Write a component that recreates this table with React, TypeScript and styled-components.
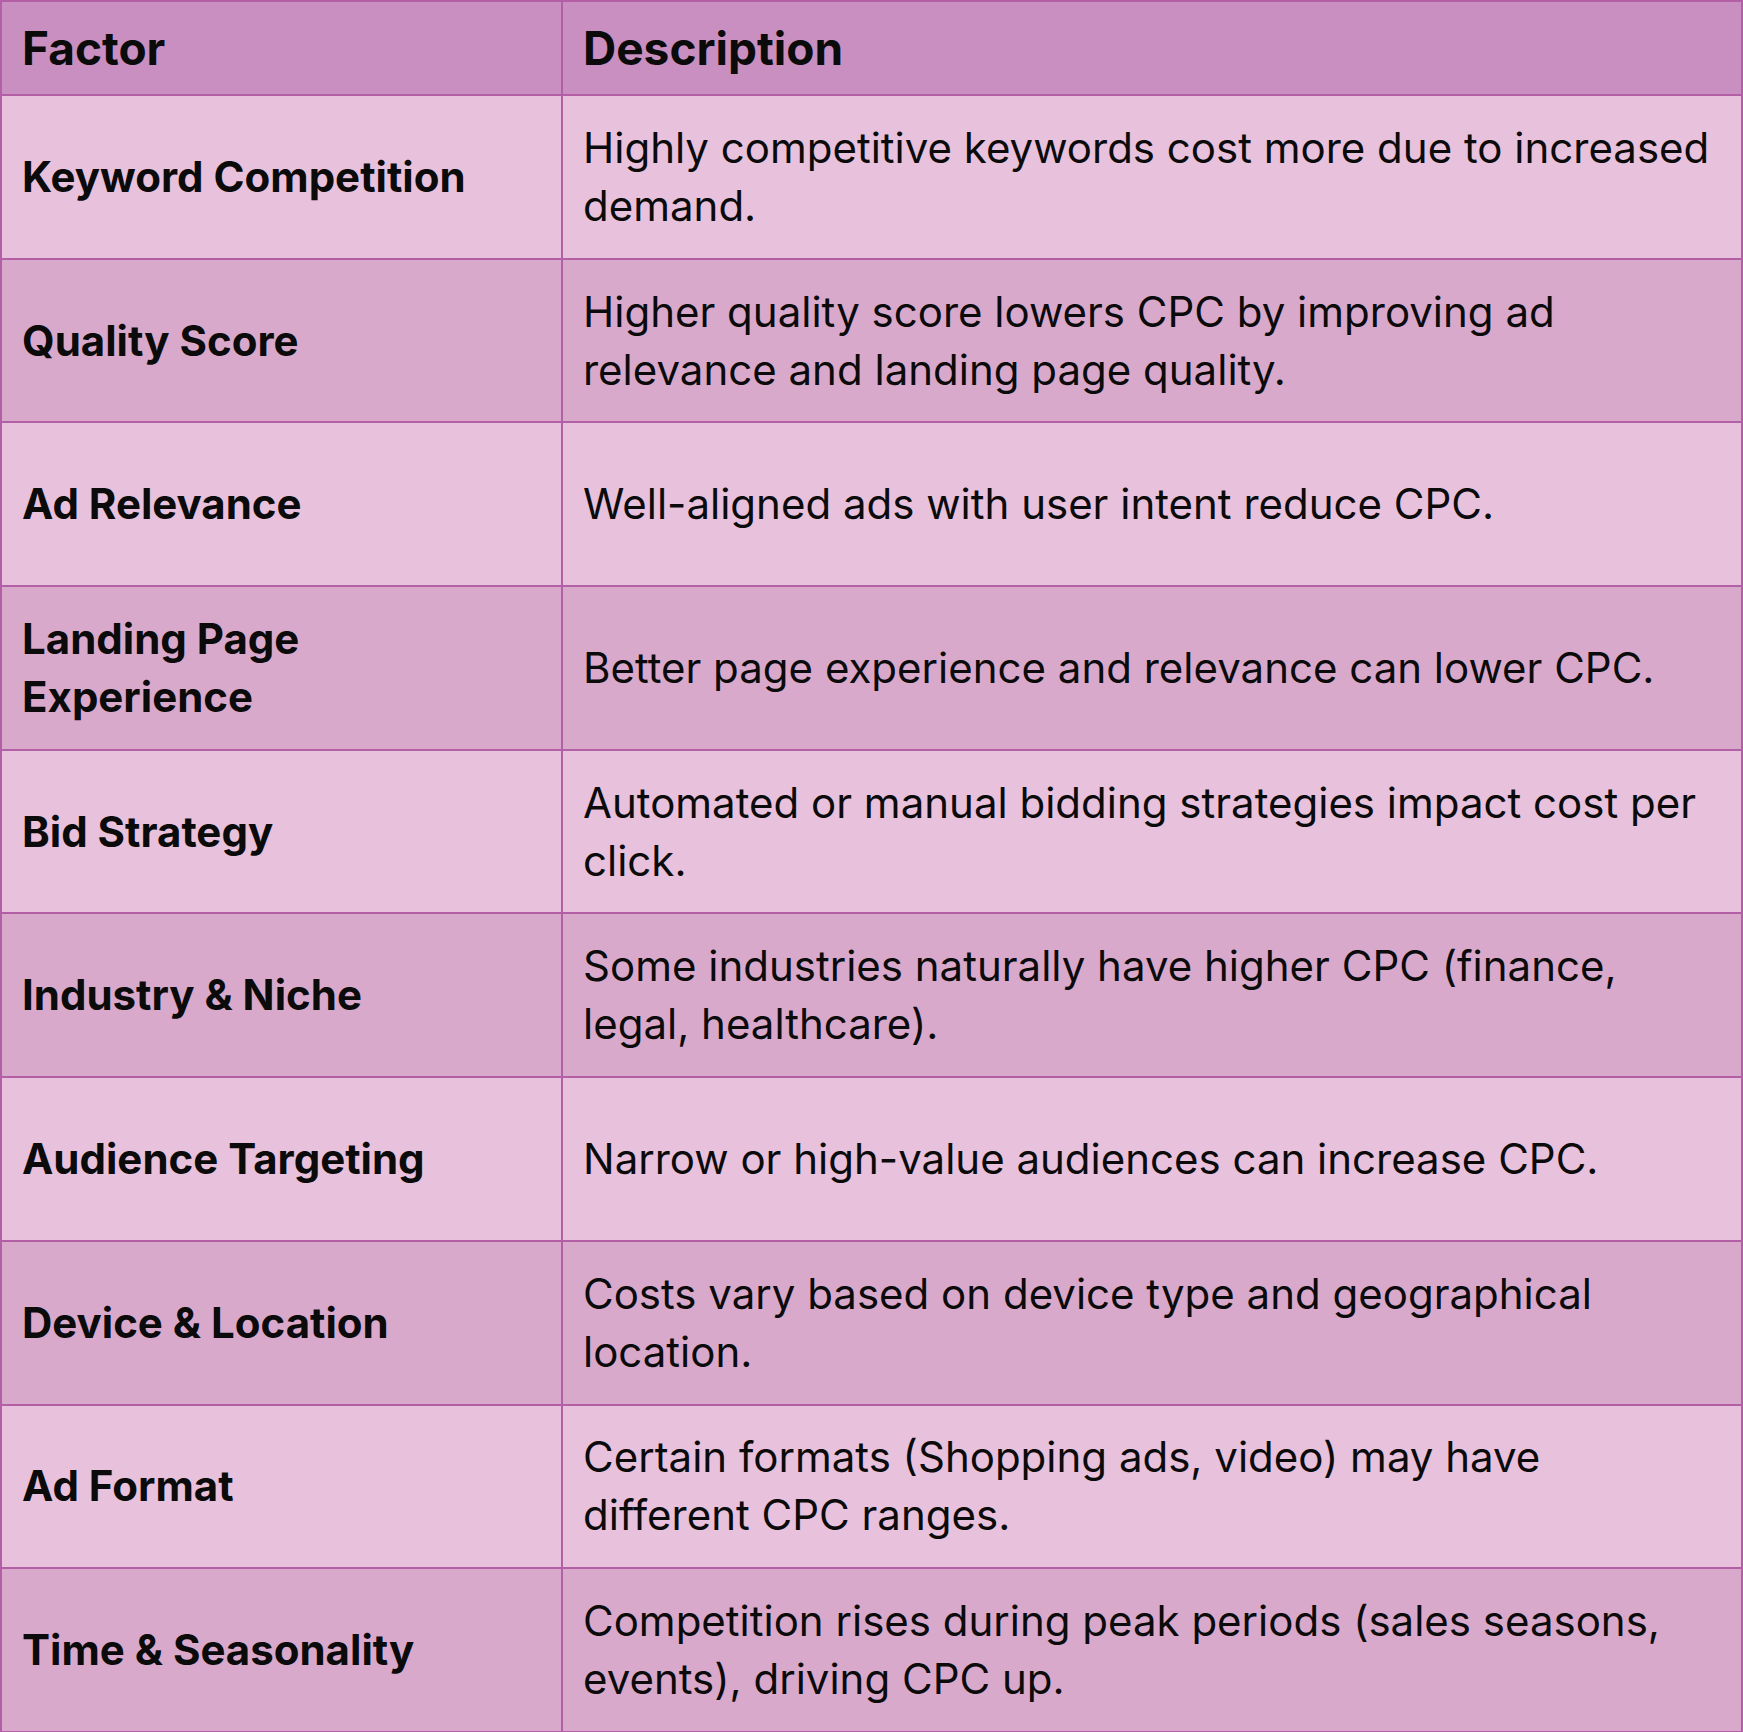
import React from "react";
import styled, { createGlobalStyle } from "styled-components";

const Global = createGlobalStyle`
  html, body { margin: 0; padding: 0; background: #ffffff; }
  body { font-family: Inter, "Noto Sans", sans-serif; color: #0b0b0b; }
`;

const Table = styled.table`
  width: 1743px;
  border-collapse: collapse;
  table-layout: fixed;
  border: 2px solid #b35fa5;
`;

const Row = styled.tr<{ $variant: "head" | "light" | "dark" }>`
  background: ${(p) =>
    p.$variant === "head" ? "#c98fc1" : p.$variant === "light" ? "#e8c1dc" : "#d9a9cc"};
  height: ${(p) => (p.$variant === "head" ? "94px" : "163.7px")};
`;

const HeadCell = styled.th`
  border: 2px solid #b35fa5;
  padding: 0 24px 0 20px;
  text-align: left;
  font-weight: 700;
  font-size: 46px;
  line-height: 58px;
  vertical-align: middle;
`;

const FactorCell = styled.td`
  border: 2px solid #b35fa5;
  padding: 0 32px 0 20px;
  font-weight: 700;
  font-size: 42px;
  line-height: 58px;
  vertical-align: middle;
`;

const DescCell = styled.td`
  border: 2px solid #b35fa5;
  padding: 0 24px 0 20px;
  font-weight: 400;
  font-size: 42px;
  line-height: 58px;
  vertical-align: middle;
`;

const rows: [string, string][] = [
  ["Keyword Competition", "Highly competitive keywords cost more due to increased demand."],
  ["Quality Score", "Higher quality score lowers CPC by improving ad relevance and landing page quality."],
  ["Ad Relevance", "Well-aligned ads with user intent reduce CPC."],
  ["Landing Page Experience", "Better page experience and relevance can lower CPC."],
  ["Bid Strategy", "Automated or manual bidding strategies impact cost per click."],
  ["Industry & Niche", "Some industries naturally have higher CPC (finance, legal, healthcare)."],
  ["Audience Targeting", "Narrow or high-value audiences can increase CPC."],
  ["Device & Location", "Costs vary based on device type and geographical location."],
  ["Ad Format", "Certain formats (Shopping ads, video) may have different CPC ranges."],
  ["Time & Seasonality", "Competition rises during peak periods (sales seasons, events), driving CPC up."],
];

export default function App() {
  return (
    <>
      <Global />
      <Table>
        <colgroup>
          <col style={{ width: "561px" }} />
          <col />
        </colgroup>
        <thead>
          <Row $variant="head">
            <HeadCell>Factor</HeadCell>
            <HeadCell>Description</HeadCell>
          </Row>
        </thead>
        <tbody>
          {rows.map(([f, d], i) => (
            <Row key={f} $variant={i % 2 === 0 ? "light" : "dark"}>
              <FactorCell>{f}</FactorCell>
              <DescCell>{d}</DescCell>
            </Row>
          ))}
        </tbody>
      </Table>
    </>
  );
}
